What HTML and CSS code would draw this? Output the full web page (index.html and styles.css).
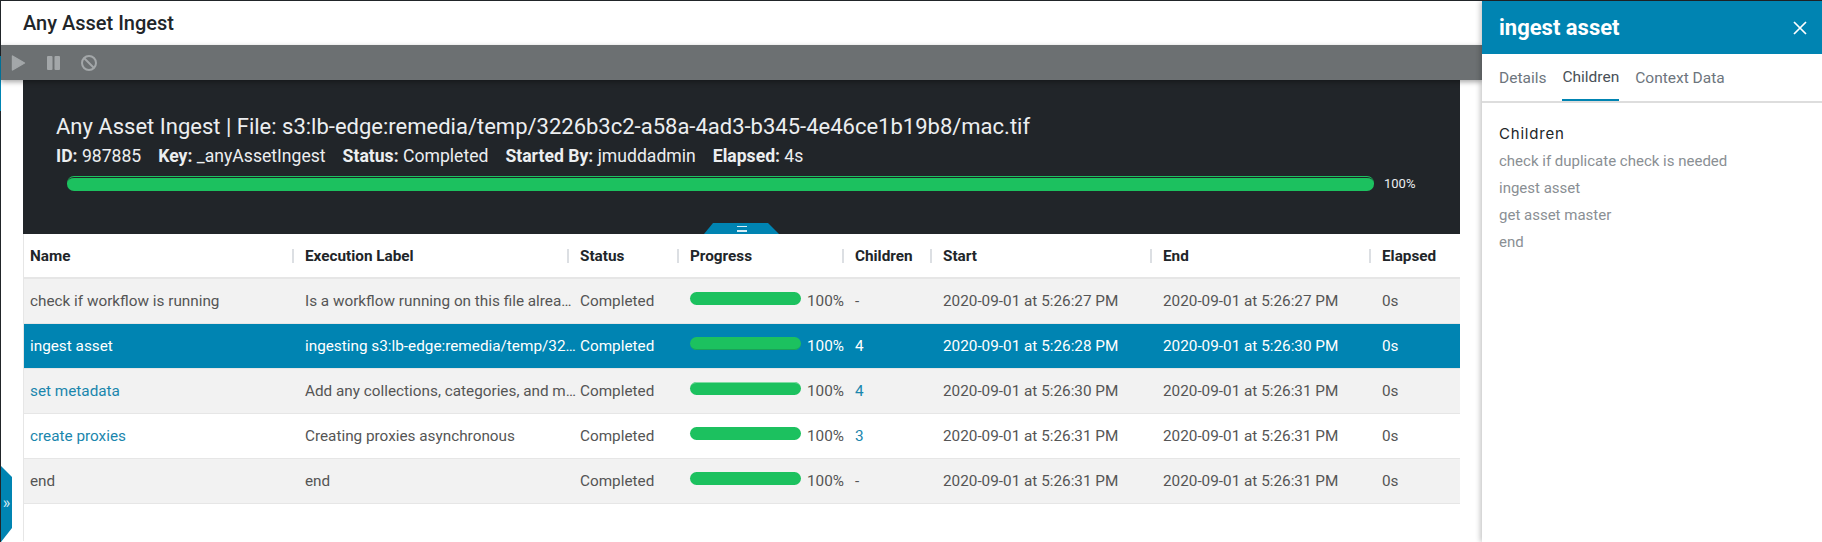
FILE: index.html
```html
<!DOCTYPE html>
<html lang="en">
<head>
<meta charset="utf-8">
<title>Any Asset Ingest</title>
<link rel="stylesheet" href="styles.css">
</head>
<body>
<div class="app">
  <main class="main">
    <header class="title-bar"><h1>Any Asset Ingest</h1></header>
    <div class="toolbar">
      <svg class="tool" viewBox="0 0 18 18" width="18" height="18"><path d="M1.5 2 13.5 9 1.5 16Z" fill="#a3a7a9" stroke="#a3a7a9" stroke-width="1.4" stroke-linejoin="round"/></svg>
      <svg class="tool" viewBox="0 0 18 18" width="18" height="18"><rect x="1" y="2" width="5.5" height="14" rx="1" fill="#a3a7a9"/><rect x="8.5" y="2" width="5.5" height="14" rx="1" fill="#a3a7a9"/></svg>
      <svg class="tool" viewBox="0 0 18 18" width="18" height="18"><circle cx="8" cy="9" r="7" fill="none" stroke="#a3a7a9" stroke-width="2"/><path d="M3 4 13 14" stroke="#a3a7a9" stroke-width="2"/></svg>
    </div>
    <section class="content">
      <div class="summary">
        <h2>Any Asset Ingest | File: s3:lb-edge:remedia/temp/3226b3c2-a58a-4ad3-b345-4e46ce1b19b8/mac.tif</h2>
        <p class="meta">
          <span><b>ID:</b> 987885</span>
          <span><b>Key:</b> _anyAssetIngest</span>
          <span><b>Status:</b> Completed</span>
          <span><b>Started By:</b> jmuddadmin</span>
          <span><b>Elapsed:</b> 4s</span>
        </p>
        <div class="overall">
          <div class="overall-bar"></div>
          <span class="overall-pct">100%</span>
        </div>
        <div class="handle"><i></i><i></i></div>
      </div>
      <div class="table">
        <div class="row head">
          <div class="cell">Name</div>
          <div class="cell">Execution Label</div>
          <div class="cell">Status</div>
          <div class="cell">Progress</div>
          <div class="cell">Children</div>
          <div class="cell">Start</div>
          <div class="cell">End</div>
          <div class="cell">Elapsed</div>
        </div>
        <div class="row odd">
          <div class="cell">check if workflow is running</div>
          <div class="cell">Is a workflow running on this file alrea…</div>
          <div class="cell">Completed</div>
          <div class="cell prog"><span class="bar"></span><span>100%</span></div>
          <div class="cell kids">-</div>
          <div class="cell">2020-09-01 at 5:26:27 PM</div>
          <div class="cell">2020-09-01 at 5:26:27 PM</div>
          <div class="cell">0s</div>
        </div>
        <div class="row selected">
          <div class="cell">ingest asset</div>
          <div class="cell">ingesting s3:lb-edge:remedia/temp/32…</div>
          <div class="cell">Completed</div>
          <div class="cell prog"><span class="bar low"></span><span>100%</span></div>
          <div class="cell kids">4</div>
          <div class="cell">2020-09-01 at 5:26:28 PM</div>
          <div class="cell">2020-09-01 at 5:26:30 PM</div>
          <div class="cell">0s</div>
        </div>
        <div class="row odd">
          <div class="cell"><a class="link">set metadata</a></div>
          <div class="cell">Add any collections, categories, and m…</div>
          <div class="cell">Completed</div>
          <div class="cell prog"><span class="bar high"></span><span>100%</span></div>
          <div class="cell kids"><a class="link">4</a></div>
          <div class="cell">2020-09-01 at 5:26:30 PM</div>
          <div class="cell">2020-09-01 at 5:26:31 PM</div>
          <div class="cell">0s</div>
        </div>
        <div class="row">
          <div class="cell"><a class="link">create proxies</a></div>
          <div class="cell">Creating proxies asynchronous</div>
          <div class="cell">Completed</div>
          <div class="cell prog"><span class="bar"></span><span>100%</span></div>
          <div class="cell kids"><a class="link">3</a></div>
          <div class="cell">2020-09-01 at 5:26:31 PM</div>
          <div class="cell">2020-09-01 at 5:26:31 PM</div>
          <div class="cell">0s</div>
        </div>
        <div class="row odd">
          <div class="cell">end</div>
          <div class="cell">end</div>
          <div class="cell">Completed</div>
          <div class="cell prog"><span class="bar"></span><span>100%</span></div>
          <div class="cell kids">-</div>
          <div class="cell">2020-09-01 at 5:26:31 PM</div>
          <div class="cell">2020-09-01 at 5:26:31 PM</div>
          <div class="cell">0s</div>
        </div>
      </div>
    </section>
  </main>
  <aside class="side">
    <header class="side-head">
      <h2>ingest asset</h2>
      <svg viewBox="0 0 14 14" width="14" height="14"><path d="M1 1 13 13M13 1 1 13" stroke="#fff" stroke-width="1.7" fill="none"/></svg>
    </header>
    <nav class="tabs">
      <span class="tab">Details</span>
      <span class="tab active">Children</span>
      <span class="tab">Context Data</span>
    </nav>
    <div class="side-body">
      <h3>Children</h3>
      <p>check if duplicate check is needed</p>
      <p>ingest asset</p>
      <p>get asset master</p>
      <p>end</p>
    </div>
  </aside>
</div>
<div class="edge-mark"></div>
<div class="nav-tab">»</div>
</body>
</html>
```
FILE: styles.css
```css
* { box-sizing: border-box; }
html, body { margin: 0; height: 100%; overflow: hidden; background: #fff; }
body { font-family: Roboto, "Liberation Sans", sans-serif; font-size: 15.3px; color: #555; }
h1, h2, h3, p { margin: 0; }

.app { display: flex; width: 1822px; height: 542px; border-top: 1px solid #212529; }
.main { width: 1482px; flex: none; display: flex; flex-direction: column; border-left: 1px solid #212529; }

.title-bar { height: 44px; display: flex; align-items: center; padding-left: 22px; }
.title-bar h1 { font-size: 20px; font-weight: 500; color: #212529; }

.toolbar { height: 35px; background: #6c7072; display: flex; align-items: center; gap: 17px; padding-left: 10px; box-shadow: 0 2px 5px rgba(0,0,0,.35); position: relative; z-index: 2; }
.tool { display: block; }

.content { flex: 1; padding: 0 22px; }
.summary { position: relative; height: 154px; background: #212529; color: #eceef0; padding: 32px 0 0 33px; }
.summary h2 { font-size: 22px; font-weight: 400; line-height: 30px; }
.meta { display: flex; gap: 17px; font-size: 17.6px; line-height: 24px; margin-top: 2px; }
.meta b { font-weight: 700; }
.overall { display: flex; align-items: center; gap: 10px; margin: 8px 0 0 11px; }
.overall-bar { width: 1307px; height: 15px; border-radius: 7px; border-top: 1px solid #1cc15f; padding-top: 1px; background: #1cc15f content-box; }
.overall-pct { font-size: 13px; }

.handle { position: absolute; left: 681px; bottom: 0; width: 75px; height: 11px; background: #0084b2; clip-path: polygon(9px 0, 64px 0, 75px 100%, 0 100%); display: flex; flex-direction: column; align-items: center; justify-content: center; gap: 3px; }
.handle i { display: block; width: 10px; height: 1.5px; background: #d8eef6; }

.table { border-left: 1px solid #e6e6e6; height: 307px; }
.row { display: grid; grid-template-columns: 268px 275px 110px 165px 88px 220px 219px 91px; height: 45px; align-items: center; border-bottom: 1px solid #e6e6e6; }
.cell { padding-left: 6px; white-space: nowrap; }
.head { height: 45px; border-bottom-width: 2px; color: #212529; font-size: 15.3px; font-weight: 700; }
.head .cell { position: relative; }
.head .cell + .cell::before { content: ""; position: absolute; left: 0; top: 2px; bottom: 2px; width: 2px; background: #dcdfe3; }
.row .cell + .cell { padding-left: 13px; }

.odd { background: #f2f2f2; }
.selected { background: #0084b2; color: #fff; }
.link { color: #1a86ad; }

.prog { display: flex; align-items: center; gap: 6px; }
.bar { display: block; flex: none; width: 111px; height: 13px; border-radius: 7px; background: #1cc15f; margin-top: -6px; }
.bar.low { box-shadow: inset 0 -2px 0 -1px #1aa257; }
.bar.high { box-shadow: inset 0 2px 0 -1px #7fdca4; }
.row .kids { padding-left: 18px; }

.side { flex: 1; position: relative; z-index: 3; background: #fff; box-shadow: -2px 0 5px rgba(0,0,0,.22); }
.side-head { height: 53px; background: #0084b2; display: flex; align-items: center; justify-content: space-between; padding: 0 15px 0 17px; color: #fff; }
.side-head h2 { font-size: 22px; font-weight: 700; }
.tabs { height: 49px; display: flex; gap: 16px; padding-left: 17px; border-bottom: 2px solid #dddddd; }
.tab { height: 47px; line-height: 49px; color: #6d757d; font-size: 15.5px; }
.tab.active { color: #495057; border-bottom: 2px solid #0084b2; line-height: 47px; }
.side-body { padding: 19px 17px; }
.side-body h3 { font-family: Inter, "Open Sans", sans-serif; font-size: 15px; font-weight: 400; color: #212529; line-height: 24px; letter-spacing: .8px; }
.side-body p { color: #8a8f94; font-size: 15px; line-height: 27px; }
.side-body h3 + p { margin-top: 2px; }

.edge-mark { position: absolute; left: 0; top: 56px; width: 1px; height: 55px; background: #0084b2; }
.nav-tab { position: absolute; left: 1px; top: 466px; width: 11px; height: 76px; background: #0084b2; clip-path: polygon(0 0, 100% 11px, 100% 62px, 0 100%); color: #d8eef6; font-size: 16px; line-height: 74px; text-align: center; }
```
